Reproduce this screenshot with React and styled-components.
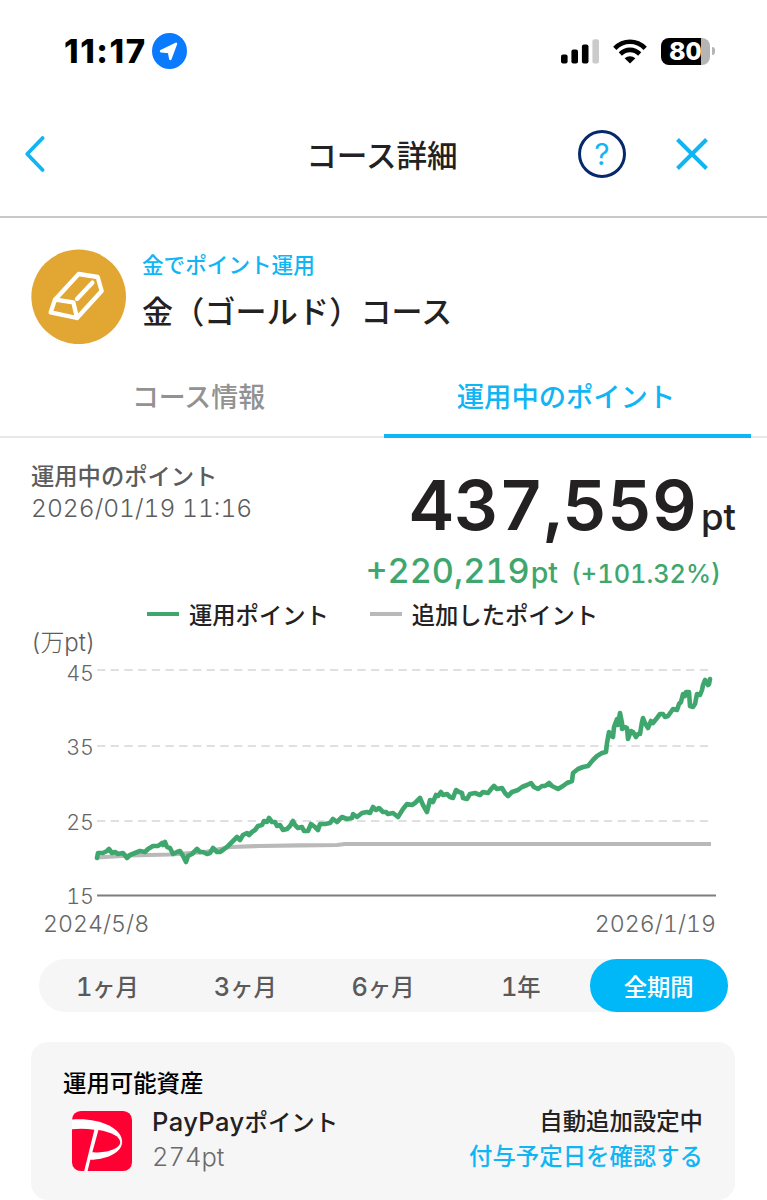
import React, { useState } from 'react';
import styled, { createGlobalStyle } from 'styled-components';

const GlobalStyle = createGlobalStyle`
    * {
        box-sizing: border-box;
    }
    body {
        margin: 0;
        background: #fff;
        color: #232122;
        font-family: Inter, "Noto Sans CJK JP", sans-serif;
        font-variant-numeric: tabular-nums;
    }
    button {
        border: 0;
        padding: 0;
        background: none;
        font: inherit;
        font-variant-numeric: inherit;
        color: inherit;
        cursor: pointer;
    }
    svg {
        display: block;
        flex: none;
    }
`;

const BLUE = '#10b5f4';
const GREEN = '#3fa76e';

// ================= style ======================= //
const Screen = styled.div`
    width: 767px;
    height: 1200px;
    overflow: hidden;
`;

const StatusBar = styled.div`
    display: flex;
    align-items: center;
    height: 102px;
    padding: 0 52px 0 64px;
`;

const Clock = styled.div`
    width: 88px;
    font-size: 33px;
    line-height: 40px;
    font-weight: 800;
    font-variant-numeric: normal;
    letter-spacing: 1.6px;
    color: #000;
`;

const StatusIcons = styled.div`
    display: flex;
    align-items: center;
    gap: 14px;
    margin-left: auto;
`;

const Battery = styled.div`
    display: flex;
    align-items: center;
    gap: 2px;
    &:after {
        content: '';
        width: 3px;
        height: 8px;
        border-radius: 0 3px 3px 0;
        background: #b5b5b5;
    }
`;

const BatteryBody = styled.div`
    width: 49px;
    height: 27px;
    border-radius: 8px;
    background: linear-gradient(to right, #000 ${(props) => props.level}%, #b5b5b5 ${(props) => props.level}%);
    color: #fff;
    font-size: 25px;
    line-height: 27px;
    font-weight: 800;
    text-align: center;
`;

const Header = styled.header`
    display: grid;
    grid-template-columns: 200px 1fr 200px;
    align-items: center;
    height: 116px;
    padding: 0 58px 10px 24px;
    border-bottom: 2px solid #c9c9c9;
`;

const Title = styled.h1`
    margin: 3px 0 0 31px;
    font-size: 30.6px;
    line-height: 40px;
    font-weight: 500;
    text-align: center;
    white-space: nowrap;
`;

const HeaderButtons = styled.div`
    display: flex;
    align-items: center;
    justify-content: flex-end;
    gap: 49px;
`;

const HelpButton = styled.button`
    width: 48px;
    height: 48px;
    border: 3.5px solid #06296b;
    border-radius: 50%;
    font-size: 30px;
    line-height: 40px;
    color: #12b5f5;
`;

const Course = styled.section`
    display: flex;
    gap: 16px;
    height: 138px;
    padding: 31px 31px 0;
`;

const CourseSub = styled.div`
    height: 32px;
    font-size: 21.6px;
    line-height: 32px;
    font-weight: 500;
    color: ${BLUE};
`;

const CourseName = styled.div`
    margin-top: 10px;
    font-size: 31px;
    line-height: 42px;
    font-weight: 500;
    letter-spacing: 0.2px;
`;

const Tabs = styled.nav`
    display: grid;
    grid-template-columns: 368px 367px;
    height: 82px;
    padding-left: 16px;
    box-shadow: inset 0 -2px #e4e8e8;
`;

const Tab = styled.button`
    padding-right: 3px;
    border-bottom: 4px solid ${(props) => (props.$active ? BLUE : 'transparent')};
    font-size: ${(props) => (props.$active ? 27.3 : 26.9)}px;
    font-weight: 500;
    color: ${(props) => (props.$active ? BLUE : '#929292')};
`;

const Summary = styled.section`
    display: flex;
    justify-content: space-between;
    height: 158px;
    padding: 22px 31px 0;
`;

const SummaryLabel = styled.div`
    margin-top: 1px;
    font-size: 23.3px;
    line-height: 32px;
    font-weight: 500;
    color: #5c5c5c;
`;

const SummaryDate = styled.div`
    font-size: 24.6px;
    line-height: 30px;
    font-weight: 300;
    color: #5c5c5c;
`;

const Amounts = styled.div`
    display: flex;
    flex-direction: column;
    align-items: flex-end;
`;

const Total = styled.div`
    height: 84px;
    font-size: 69.4px;
    line-height: 90px;
    font-weight: 600;
    white-space: nowrap;
    span {
        margin-left: 4px;
        font-size: 36.5px;
        font-weight: 500;
    }
`;

const Gain = styled.div`
    margin-right: 15px;
    font-size: 34.2px;
    line-height: 54px;
    font-weight: 500;
    color: ${GREEN};
    white-space: nowrap;
    span {
        margin-left: 1px;
        font-size: 28.5px;
    }
    span + span {
        margin-left: 13px;
        font-size: 25.3px;
    }
`;

const Legend = styled.div`
    display: flex;
    gap: 41px;
    height: 36px;
    padding-left: 147px;
`;

const LegendItem = styled.div`
    display: flex;
    align-items: center;
    gap: 10px;
    font-size: 23.3px;
    font-weight: 500;
    &:before {
        content: '';
        width: 32px;
        height: 4px;
        background: ${(props) => props.color};
    }
`;

const AxisUnit = styled.div`
    height: 24px;
    padding-left: 31px;
    font-size: 24px;
    line-height: 22px;
    font-weight: 300;
    color: #5c5c5c;
`;

const AxisLabel = styled.text`
    font-size: 21.5px;
    font-weight: 300;
    fill: #666;
    text-anchor: end;
`;

const Dates = styled.div`
    display: flex;
    justify-content: space-between;
    height: 51px;
    padding: 0 51px 0 43px;
    font-size: 23.2px;
    line-height: 32px;
    font-weight: 300;
    color: #666;
`;

const Periods = styled.div`
    display: grid;
    grid-template-columns: repeat(5, 1fr);
    width: 689px;
    height: 53px;
    margin-left: 39px;
    border-radius: 27px;
    background: #f6f6f6;
`;

const Period = styled.button`
    padding-right: 1px;
    border-radius: 27px;
    background: ${(props) => (props.$active ? '#00b7f8' : 'transparent')};
    color: ${(props) => (props.$active ? '#fff' : '#5a5a5a')};
    font-size: 23.3px;
    font-weight: 500;
`;

// latin letters and digits run a little larger than the kana beside them
const Latin = styled.span`
    font-size: 1.09em;
`;

const Card = styled.section`
    height: 158px;
    margin: 30px 32px 0 31px;
    padding: 25px 32px 0;
    border-radius: 17px;
    background: #f6f6f6;
`;

const CardTitle = styled.div`
    font-size: 23.4px;
    line-height: 34px;
    font-weight: 500;
    color: #000;
`;

const Asset = styled.div`
    display: flex;
    margin-top: 4px;
    padding-left: 9px;
    gap: 20px;
    svg {
        margin-top: 6px;
    }
`;

const AssetText = styled.div`
    flex: ${(props) => (props.right ? 'none' : 1)};
    text-align: ${(props) => (props.right ? 'right' : 'left')};
`;

const AssetLine = styled.div`
    height: 35px;
    font-size: 23.4px;
    line-height: 34px;
    font-weight: ${(props) => props.weight || 500};
    color: ${(props) => props.color || 'inherit'};
    ${Latin} {
        letter-spacing: ${(props) => (props.weight ? 0 : 0.4)}px;
    }
`;

// ================= data ======================= //
const gridLines = [
    { label: 45, y: 670, baseline: 681 },
    { label: 35, y: 746, baseline: 755 },
    { label: 25, y: 821, baseline: 830 },
];

const investedPoints = '97,857.5 130,855.5 170,854.5 205,852 230,847 260,846 300,845.3 337,845 345,844 711,844';

const valuePoints = `
    97,858 98,853 103,853 107,851 109,849 112,853 115,852 118,854 123,853 127,858 130,855 135,853
    140,851 145,852 148,849 153,846 158,846 162,843 163,845 165,842 167,847 170,848 173,854 177,852
    180,851 183,856 186,862 188,856 192,854 197,849 200,852 203,852 207,854 210,853 213,848 217,852
    220,852 223,850 228,846 232,842 237,837 240,840 243,835 247,833 249,835 252,832 255,830 258,826
    262,825 264,821 267,822 269,818 272,822 275,822 277,826 280,825 283,830 287,829 290,826 293,821
    295,825 298,828 302,827 304,831 308,831 311,824 315,827 318,830 320,824 325,824 330,823 333,819
    337,822 342,817 347,819 352,818 353,814 357,817 362,813 367,812 370,813 373,807 376,810 379,808
    383,812 386,812 388,814 393,813 398,817 403,809 407,804 412,805 415,803 420,798 423,805 427,812
    430,800 433,802 436,795 438,796 441,792 443,795 447,794 450,797 453,798 456,790 459,792 462,793
    463,798 467,799 470,794 475,793 480,795 483,792 488,793 492,788 494,786 497,789 502,788 505,793
    508,796 512,792 518,790 522,787 527,785 531,783 534,787 538,789 542,786 545,786 549,783 552,786
    558,789 563,786 567,783 572,781 573,773 578,769 583,767 588,766 593,760 597,756 602,753 606,752
    607,743 609,732 611,736 613,737 614,727 617,719 618,725 620,713 622,723 622,729 625,727 627,728
    628,739 631,731 633,732 636,737 638,734 640,734 642,722 643,718 645,723 648,728 651,721 653,723
    657,718 660,714 663,714 665,717 668,716 673,709 677,710 679,704 681,702 683,694 685,696 686,692
    689,692 690,706 693,707 695,704 697,694 700,695 702,690 703,685 705,680 708,685 709,684 710,679
`;

const periods = [
    { count: 1, unit: 'ヶ月' },
    { count: 3, unit: 'ヶ月' },
    { count: 6, unit: 'ヶ月' },
    { count: 1, unit: '年' },
    { unit: '全期間' },
];

// ================= icons ======================= //
const LocationIcon = () => (
    <svg width="35" height="36" viewBox="0 0 35 36">
        <ellipse cx="17.5" cy="18" rx="17.5" ry="18" fill="#0a7aff" />
        <path d="M24 10.8 18.3 26 17 19 9 18.2Z" fill="#fff" stroke="#fff" strokeWidth="2.4" strokeLinejoin="round" />
    </svg>
);

const SignalIcon = () => (
    <svg width="38" height="25" viewBox="0 0 38 25">
        <rect x="0" y="15.5" width="6.6" height="9" rx="2" />
        <rect x="10.4" y="10.5" width="6.6" height="14" rx="2" />
        <rect x="20.9" y="5.5" width="6.6" height="19" rx="2" />
        <rect x="31.4" y="0.3" width="6.6" height="24.2" rx="2" fill="#cbcbcb" />
    </svg>
);

const WifiIcon = () => (
    <svg width="34" height="25" viewBox="0 0 34 25">
        <g fill="none" stroke="#000" strokeWidth="4.6">
            <path d="M1.8 9.3C10.5 0.6 23.5 0.6 32.2 9.3" />
            <path d="M7.3 15C13 9.5 21 9.5 26.7 15" />
        </g>
        <path d="M17 24.6 11.6 19.2C14.8 16.5 19.2 16.5 22.4 19.2Z" />
    </svg>
);

const BackIcon = () => (
    <svg width="22" height="38" viewBox="0 0 22 38">
        <path d="M18.6 3 3.2 19 18.6 35" fill="none" stroke={BLUE} strokeWidth="3.8" strokeLinecap="round" strokeLinejoin="round" />
    </svg>
);

const CloseIcon = () => (
    <svg width="34" height="34" viewBox="0 0 34 34">
        <path d="M2.5 2.5 31.5 31.5M31.5 2.5 2.5 31.5" fill="none" stroke={BLUE} strokeWidth="4" />
    </svg>
);

const GoldIcon = () => (
    <svg width="95" height="95" viewBox="0 0 285 285">
        <circle cx="143" cy="143.5" r="142" fill="#e2a733" />
        <g fill="none" stroke="#fff" strokeWidth="13" strokeLinecap="round" strokeLinejoin="round">
            <path d="M72 152 143 75 200 84 212 126 138 207 59 190Z" />
            <path d="M72 152 127 160 138 207" />
            <path d="M138 150 184 101" />
        </g>
    </svg>
);

const PayPayLogo = () => (
    <svg width="60" height="60" viewBox="0 0 177 177">
        <rect width="177" height="177" rx="26" fill="#ff0033" />
        <path d="M0 25C75 18 148 48 148 90C148 122 105 143 54 144L46 177H36L66 55Q30 51 0 54Z" fill="#fff" />
        <path d="M78 56C115 62 142 75 142 92C142 112 100 124 60 122Z" fill="#ff0033" />
    </svg>
);

// ================= component ======================= //
function Chart() {
    return (
        <svg width="767" height="252" viewBox="0 656 767 252">
            {gridLines.map((line) => (
                <g key={line.label}>
                    <AxisLabel x="94" y={line.baseline}>{line.label}</AxisLabel>
                    <path d={`M97 ${line.y}H711`} stroke="#e0e0e0" strokeWidth="2" strokeDasharray="8.3 5.4" />
                </g>
            ))}
            <AxisLabel x="94" y="904">15</AxisLabel>
            <path d="M97 895.5H716" stroke="#7d7d7d" strokeWidth="2" />
            <polyline points={investedPoints} fill="none" stroke="#b9b9b9" strokeWidth="4.2" />
            <polyline points={valuePoints} fill="none" stroke={GREEN} strokeWidth="4.6" strokeLinejoin="round" strokeLinecap="round" />
        </svg>
    );
}

function App() {
    const [tab, setTab] = useState(1);
    const [period, setPeriod] = useState(4);

    return (
        <Screen>
            <GlobalStyle />
            <StatusBar>
                <Clock>11:17</Clock>
                <LocationIcon />
                <StatusIcons>
                    <SignalIcon />
                    <WifiIcon />
                    <Battery><BatteryBody level={81}>80</BatteryBody></Battery>
                </StatusIcons>
            </StatusBar>
            <Header>
                <button><BackIcon /></button>
                <Title>コース詳細</Title>
                <HeaderButtons>
                    <HelpButton>?</HelpButton>
                    <button><CloseIcon /></button>
                </HeaderButtons>
            </Header>
            <Course>
                <GoldIcon />
                <div>
                    <CourseSub>金でポイント運用</CourseSub>
                    <CourseName>金（ゴールド）コース</CourseName>
                </div>
            </Course>
            <Tabs>
                <Tab $active={tab === 0} onClick={() => setTab(0)}>コース情報</Tab>
                <Tab $active={tab === 1} onClick={() => setTab(1)}>運用中のポイント</Tab>
            </Tabs>
            <Summary>
                <div>
                    <SummaryLabel>運用中のポイント</SummaryLabel>
                    <SummaryDate>2026/01/19 11:16</SummaryDate>
                </div>
                <Amounts>
                    <Total>437,559<span>pt</span></Total>
                    <Gain>+220,219<span>pt</span><span>(+101.32%)</span></Gain>
                </Amounts>
            </Summary>
            <Legend>
                <LegendItem color={GREEN}>運用ポイント</LegendItem>
                <LegendItem color="#b9b9b9">追加したポイント</LegendItem>
            </Legend>
            <AxisUnit>(万pt)</AxisUnit>
            <Chart />
            <Dates>
                <span>2024/5/8</span>
                <span>2026/1/19</span>
            </Dates>
            <Periods>
                {periods.map((item, i) => (
                    <Period key={i} $active={i === period} onClick={() => setPeriod(i)}>
                        {item.count && <Latin>{item.count}</Latin>}{item.unit}
                    </Period>
                ))}
            </Periods>
            <Card>
                <CardTitle>運用可能資産</CardTitle>
                <Asset>
                    <PayPayLogo />
                    <AssetText>
                        <AssetLine><Latin>PayPay</Latin>ポイント</AssetLine>
                        <AssetLine weight={300} color="#6a6a6a"><Latin>274pt</Latin></AssetLine>
                    </AssetText>
                    <AssetText right>
                        <AssetLine>自動追加設定中</AssetLine>
                        <AssetLine color={BLUE}>付与予定日を確認する</AssetLine>
                    </AssetText>
                </Asset>
            </Card>
        </Screen>
    );
}

export default App;
